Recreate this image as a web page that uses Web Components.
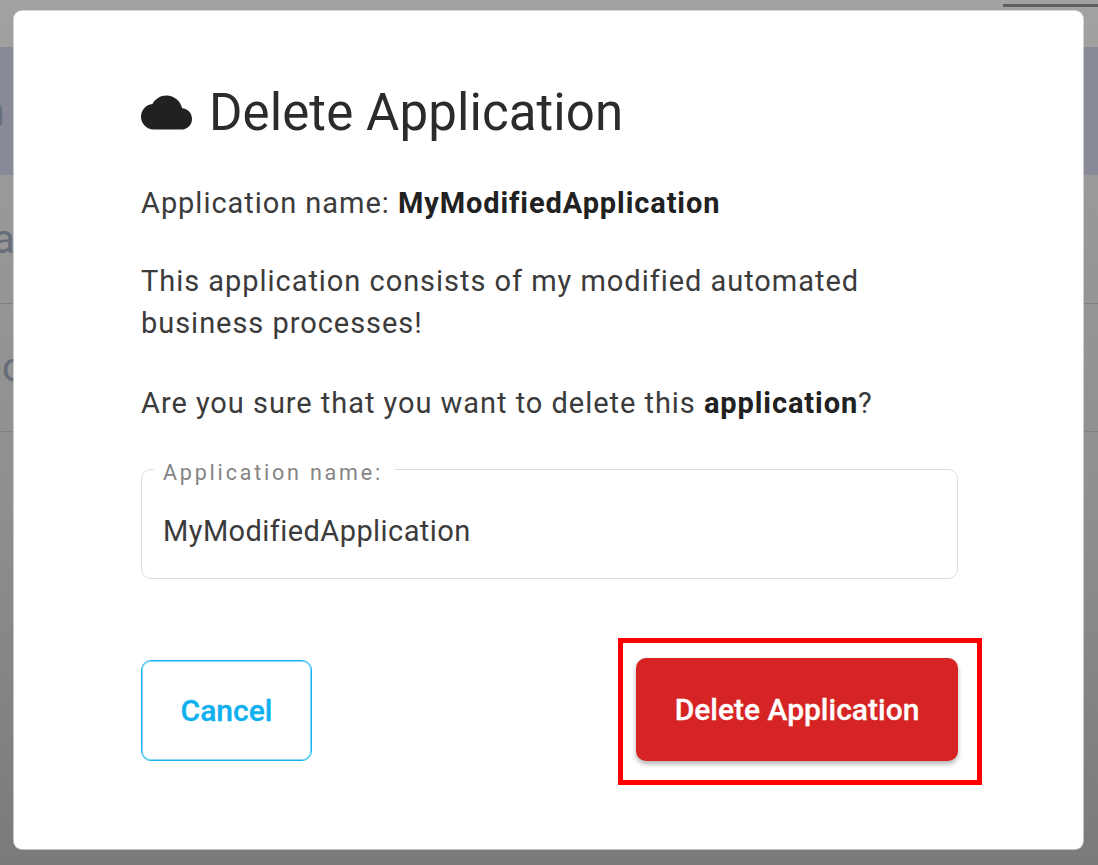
<!DOCTYPE html>
<html>
<head>
<meta charset="utf-8">
<style>
  html, body { margin: 0; height: 865px; overflow: hidden; background: #9a9a9a; font-family: Roboto, sans-serif; }
</style>
</head>
<body>
<backdrop-page></backdrop-page>
<delete-dialog app-name="MyModifiedApplication">
  <span slot="description">This application consists of my modified automated business processes!</span>
</delete-dialog>

<script>
// Greyed out page behind the dialog
class BackdropPage extends HTMLElement {
  connectedCallback() {
    const shadow = this.attachShadow({ mode: "open" });
    shadow.innerHTML = `
      <style>
        :host { display: block; height: 865px; font: 40px Roboto, sans-serif; color: #666c78; overflow: hidden;
                background: linear-gradient(#a2a2a2, #979797 240px, #8f8f8f 500px, #7a7a7a); }
        .top { height: 47px; display: flex; justify-content: flex-end; }
        .tab { width: 95px; height: 3px; margin-top: 4px; background: #5f5f5f; }
        .band { height: 128px; background: #888b97; display: flex; align-items: center; font-weight: 500; }
        .row { height: 127px; border-bottom: 1px solid #808080; display: flex; align-items: center; }
        .band + .row { height: 128px; }
        .n { margin-left: -18px; }
        .a { margin-left: -7px; }
        .c { margin-left: 2px; }
      </style>
      <div class="top"><div class="tab"></div></div>
      <div class="band"><span class="n">n</span></div>
      <div class="row"><span class="a">a</span></div>
      <div class="row"><span class="c">c</span></div>`;
  }
}

class AppField extends HTMLElement {
  connectedCallback() {
    const shadow = this.attachShadow({ mode: "open" });
    const label = this.getAttribute("label") || "";
    const value = this.getAttribute("value") || "";
    shadow.innerHTML = `
      <style>
        :host { display: block; }
        fieldset { margin: 0; padding: 0 21px; height: 126px; box-sizing: border-box; border: 1px solid #dcdcdc; border-radius: 10px; }
        legend { margin-left: -9px; padding: 8px 12px 0 9px; font-size: 21.5px; line-height: 24px; letter-spacing: 2.8px; color: #858585; }
        input { display: block; width: 100%; box-sizing: border-box; border: 0; outline: 0; padding: 0; margin-top: 24px; height: 44px;
                font: 29px Roboto, sans-serif; letter-spacing: .42px; color: #3b3b3b; background: transparent; }
      </style>
      <fieldset>
        <legend>${label}</legend>
        <input type="text" value="${value}">
      </fieldset>`;
  }
}

class ActionButton extends HTMLElement {
  connectedCallback() {
    const shadow = this.attachShadow({ mode: "open" });
    shadow.innerHTML = `
      <style>
        :host { display: block; }
        button { display: block; box-sizing: border-box; width: 100%; height: 100%; border-radius: 10px; cursor: pointer;
                 font: 500 30px Roboto, sans-serif; -webkit-text-stroke: .3px currentColor; }
        :host([kind="outline"]) button { background: #fff; color: #0eb0ee; border: 1px solid #12b2ef; box-shadow: inset 0 0 0 1px rgba(28,182,240,.5); }
        :host([kind="danger"]) button { background: #d62424; color: #fff; border: 0;
                 box-shadow: 0 3px 5px rgba(0,0,0,.3); }
      </style>
      <button><slot></slot></button>`;
  }
}

class DeleteDialog extends HTMLElement {
  connectedCallback() {
    const shadow = this.attachShadow({ mode: "open" });
    const name = this.getAttribute("app-name") || "";
    shadow.innerHTML = `
      <style>
        :host { display: block; position: absolute; left: 14px; top: 11px; width: 1069px; height: 838px; box-sizing: border-box;
                padding: 66px 125px 0 127px; background: #fff; border-radius: 8px;
                box-shadow: 0 0 0 1px rgba(255,255,255,.55);
                font: 29px Roboto, sans-serif; letter-spacing: .96px; color: #3b3b3b; }
        h1 { display: flex; align-items: center; gap: 17px; margin: 0; height: 70px; font-size: 51px; font-weight: 400; letter-spacing: .1px; color: #2b2b2b; }
        svg { width: 51px; height: 51px; display: block; fill: #212121; flex: none; }
        p { margin: 0; line-height: 42px; }
        b { font-weight: 700; color: #212121; letter-spacing: .9px; }
        .name { margin-top: 35px; }
        .desc { margin-top: 36px; }
        .ask { margin-top: 38px; }
        app-field { margin-top: 29px; }
        .actions { display: flex; justify-content: space-between; align-items: flex-start; margin-top: 59px; margin-right: -24px; }
        .cancel { width: 171px; height: 101px; margin-top: 22px; }
        .hl { border: 5px solid #ff0000; padding: 15px 19px 19px 13px; }
        .delete { width: 322px; height: 103px; }
      </style>
      <h1>
        <svg viewBox="0 0 24 24"><path d="M19.35 10.04C18.67 6.59 15.64 4 12 4 9.11 4 6.6 5.64 5.35 8.04 2.34 8.36 0 10.91 0 14c0 3.31 2.69 6 6 6h13c2.76 0 5-2.24 5-5 0-2.64-2.05-4.78-4.65-4.96z"/></svg>
        Delete Application
      </h1>
      <p class="name">Application name: <b>${name}</b></p>
      <p class="desc"><slot name="description"></slot></p>
      <p class="ask">Are you sure that you want to delete this <b>application</b>?</p>
      <app-field label="Application name:" value="${name}"></app-field>
      <div class="actions">
        <action-button class="cancel" kind="outline">Cancel</action-button>
        <div class="hl"><action-button class="delete" kind="danger">Delete Application</action-button></div>
      </div>`;
  }
}

customElements.define("backdrop-page", BackdropPage);
customElements.define("app-field", AppField);
customElements.define("action-button", ActionButton);
customElements.define("delete-dialog", DeleteDialog);
</script>
</body>
</html>
